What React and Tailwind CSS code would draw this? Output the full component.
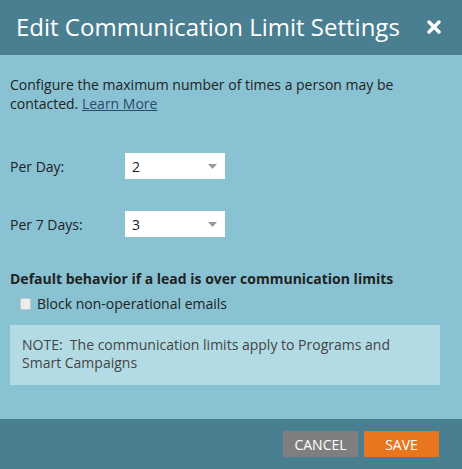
import React from "react";

export default function App() {
  const font = { fontFamily: '"Open Sans", "Liberation Sans", sans-serif' };
  return (
    <div className="w-[462px] h-[469px] flex flex-col bg-[#89c3d3] text-[#222]" style={font}>
      <div className="h-[55px] bg-[#4a7f91] flex items-center justify-between pl-[16px] pr-[21px] shrink-0">
        <div className="text-[24px] text-white leading-none pb-[2px]">Edit Communication Limit Settings</div>
        <svg width="14" height="14" viewBox="0 0 14 14" className="mb-[1px]">
          <path d="M2 2 L12 12 M12 2 L2 12" stroke="white" strokeWidth="3.4" strokeLinecap="round" />
        </svg>
      </div>
      <div className="flex-1 flex flex-col px-[10px]">
        <p className="text-[14px] leading-[19px] mt-[20px]">
          Configure the maximum number of times a person may be contacted.{" "}
          <span className="underline text-[#2b4a6a]">Learn More</span>
        </p>
        <div className="flex items-center mt-[40px] h-[26px]">
          <div className="w-[115px] text-[14px]">Per Day:</div>
          <div className="w-[100px] h-[26px] bg-white flex items-center justify-between pl-[7px] pr-[8px] text-[14px]">
            <span>2</span>
            <svg width="9" height="5" viewBox="0 0 9 5"><path d="M0 0 H9 L4.5 5 Z" fill="#999" /></svg>
          </div>
        </div>
        <div className="flex items-center mt-[32px] h-[26px]">
          <div className="w-[115px] text-[14px]">Per 7 Days:</div>
          <div className="w-[100px] h-[26px] bg-white flex items-center justify-between pl-[7px] pr-[8px] text-[14px]">
            <span>3</span>
            <svg width="9" height="5" viewBox="0 0 9 5"><path d="M0 0 H9 L4.5 5 Z" fill="#999" /></svg>
          </div>
        </div>
        <div className="mt-[33px] text-[14px] font-bold leading-[18px]">Default behavior if a lead is over communication limits</div>
        <div className="flex items-center mt-[7px] pl-[10px] text-[14px] leading-[18px]">
          <span className="w-[11px] h-[12px] bg-[#ececec] border border-[#c8c8c8] rounded-[2px] mr-[6px]"></span>
          <span>Block non-operational emails</span>
        </div>
        <div className="mt-[12px] w-[430px] h-[60px] bg-[#b2dbe4] px-[12px] pt-[11px] text-[14px] leading-[18px] text-[#444]">
          NOTE:&nbsp; The communication limits apply to Programs and Smart Campaigns
        </div>
      </div>
      <div className="h-[50px] bg-[#4a7f91] flex items-center justify-end pr-[23px] gap-[6px] shrink-0">
        <div className="w-[75px] h-[26px] bg-[#7f7f7f] text-white text-[14px] flex items-center justify-center">CANCEL</div>
        <div className="w-[75px] h-[26px] bg-[#e8761f] text-white text-[14px] flex items-center justify-center">SAVE</div>
      </div>
    </div>
  );
}
